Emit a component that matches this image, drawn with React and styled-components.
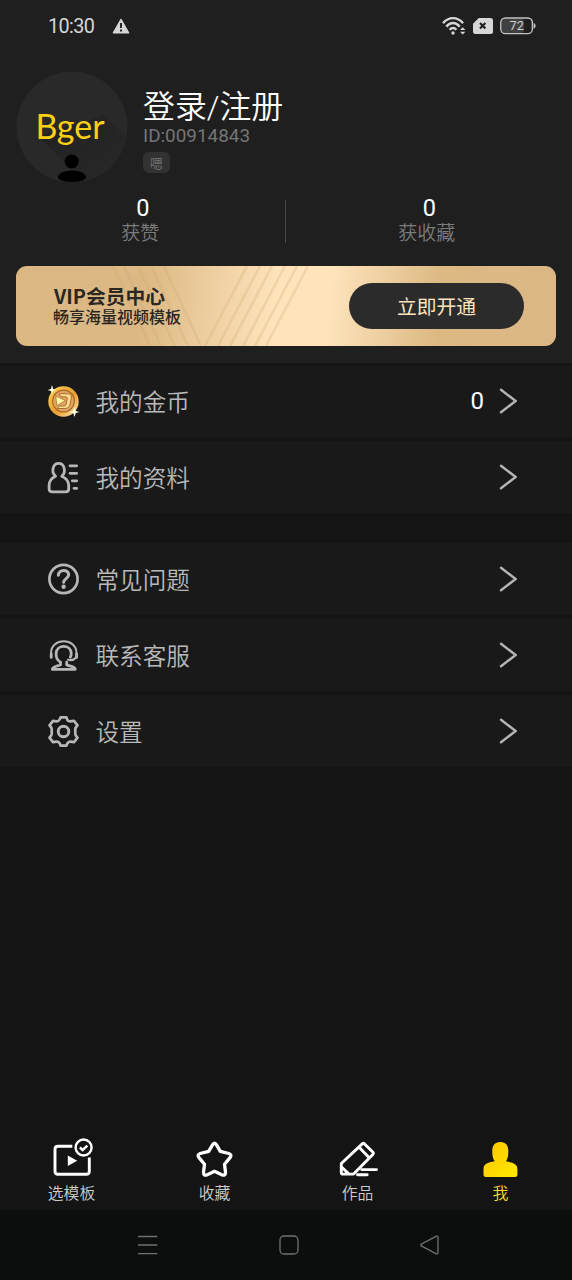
import styled, { createGlobalStyle } from "styled-components";

const GlobalStyle = createGlobalStyle`
  * {
    box-sizing: border-box;
  }

  body {
    margin: 0;
    background: #141414;
    font-family: Roboto, "Noto Sans CJK SC", sans-serif;
  }
`;

const Screen = styled.div`
  display: flex;
  flex-direction: column;
  width: 572px;
  height: 1280px;
  background: #141414;
`;

const Header = styled.header`
  height: 364px;
  background: #1f1f1f;
  border-bottom: 1px solid #171717;
`;

const StatusBar = styled.div`
  display: flex;
  align-items: center;
  height: 52px;
  padding: 0 36px 0 48px;
`;

const Clock = styled.span`
  width: 64px;
  padding-top: 2px;
  color: #d6d6d6;
  font-size: 19.8px;
  letter-spacing: -0.6px;
  line-height: 24px;
`;

const StatusIcons = styled.div`
  display: flex;
  align-items: center;
  gap: 7px;
  margin-left: auto;
`;

const Profile = styled.div`
  display: flex;
  height: 131px;
  padding: 19px 16px 0;
`;

const Avatar = styled.div`
  width: 112px;
  height: 112px;
  margin-right: 15px;
`;

const ProfileInfo = styled.div`
  padding-top: 17px;
`;

const Name = styled.h1`
  margin: 0;
  color: #fff;
  font-size: 31.9px;
  font-weight: 350;
  line-height: 38px;
`;

const UserId = styled.div`
  color: #757575;
  font-size: 18.9px;
  line-height: 20px;
`;

const Tag = styled.span`
  display: flex;
  align-items: center;
  justify-content: center;
  width: 27px;
  height: 21px;
  margin-top: 6px;
  border-radius: 6px;
  background: #323232;
  color: #777;
  font-size: 13px;
  font-weight: 350;
`;

const Stats = styled.div`
  display: flex;
  height: 83px;
  padding-top: 12px;
`;

const Stat = styled.div`
  flex: 1;
  text-align: center;
`;

const StatDivider = styled.div`
  width: 1px;
  height: 43px;
  margin: 5px 1px 0 -1px;
  background: #484848;
`;

const StatValue = styled.div`
  color: #fff;
  font-size: 23.5px;
  line-height: 26px;
`;

const StatLabel = styled.div`
  padding: 1px 5px 0 0;
  color: #7c7c7c;
  font-size: 19px;
  font-weight: 350;
  line-height: 24px;
`;

const VipBanner = styled.section`
  display: flex;
  align-items: center;
  position: relative;
  width: 540px;
  height: 80px;
  margin: 0 16px;
  padding: 0 32px 0 37px;
  border-radius: 11px;
  overflow: hidden;
  background: linear-gradient(
    96deg,
    #dab783 0%,
    #dcb984 24%,
    #fee3bb 48%,
    #fee3bb 58%,
    #dcb983 78%,
    #dab785 100%
  );
`;

const BannerStripes = styled.svg`
  position: absolute;
  top: 0;
  left: 0;
`;

const BannerText = styled.div`
  position: relative;
  flex: 1;
  color: #2a2722;
`;

const BannerTitle = styled.div`
  margin-bottom: 2px;
  padding-left: 1px;
  font-family: "Noto Sans CJK SC", sans-serif;
  font-size: 19.8px;
  font-weight: 700;
  line-height: 20px;
`;

const BannerSubtitle = styled.div`
  font-size: 16px;
  font-weight: 500;
  line-height: 19px;
`;

const OpenButton = styled.button`
  position: relative;
  width: 175px;
  height: 46px;
  border: none;
  border-radius: 23px;
  padding: 0 0 2px;
  background: #2b2b2b;
  color: #fce4be;
  font-family: inherit;
  font-size: 19.8px;
`;

const Menu = styled.main`
  flex: 1;
  padding-top: 1px;
`;

const MenuGroup = styled.div`
  display: flex;
  flex-direction: column;
  gap: 4px;
  margin-bottom: 30px;
`;

const MenuRow = styled.div`
  display: flex;
  align-items: center;
  height: 72px;
  padding: 0 55px 0 47px;
  background: #191919;
`;

const MenuLabel = styled.span`
  flex: 1;
  margin-left: 15.5px;
  padding-top: 3px;
  color: #b9b9b9;
  font-size: 23.6px;
  font-weight: 350;
  line-height: 32px;
`;

const MenuValue = styled.span`
  margin-right: 15px;
  color: #fff;
  font-size: 24px;
`;

const TabBar = styled.nav`
  display: flex;
  height: 75px;
`;

const Tab = styled.div`
  flex: 1;
  display: flex;
  flex-direction: column;
  align-items: center;
  color: ${(props) => (props.$active ? "#fddc2c" : "#cdcdcd")};
  font-size: 15.8px;
  font-weight: 350;
  line-height: 22px;

  svg {
    margin-bottom: 2px;
  }
`;

const SystemNav = styled.div`
  display: flex;
  align-items: center;
  gap: 118px;
  height: 70px;
  padding-left: 136px;
  background: #0a0f0e;
`;

const WarningIcon = () => (
  <svg width="18" height="16" viewBox="0 0 18 16">
    <path d="M9 1L17 15H1Z" fill="#d6d6d6" stroke="#d6d6d6" strokeWidth="1" strokeLinejoin="round" />
    <path d="M9 5V10M9 11.6V13.6" stroke="#1f1f1f" strokeWidth="1.9" />
  </svg>
);

const WifiIcon = () => (
  <svg width="24" height="20" viewBox="0 0 24 20" fill="none" stroke="#d6d6d6" strokeWidth="2.4">
    <path d="M1 7.2C6.6 .4 15.4 .4 21 7.2" />
    <path d="M4.3 10.6C8.4 5.8 13.6 5.8 17.7 10.6" />
    <path d="M7.6 13.8C9.8 11.3 12.2 11.3 14.4 13.8" />
    <circle cx="11" cy="17" r="1.7" fill="#d6d6d6" stroke="none" />
    <path d="M18 14L20.7 11.2L23.4 14ZM18 15.8H23.4L20.7 18.6Z" fill="#d6d6d6" stroke="none" />
  </svg>
);

const SimIcon = () => (
  <svg width="20" height="16" viewBox="0 0 20 16">
    <path d="M5.8 0H17.5Q20 0 20 2.5V13.5Q20 16 17.5 16H2.5Q0 16 0 13.5V5.8Z" fill="#d6d6d6" />
    <path d="M7 5L12.4 10.6M12.4 5L7 10.6" stroke="#1f1f1f" strokeWidth="2.1" />
  </svg>
);

const BatteryIcon = () => (
  <svg width="36" height="18" viewBox="0 0 36 18">
    <rect x="2" y="2" width="22" height="14" rx="3" fill="#404040" />
    <rect x=".8" y="1" width="31.6" height="15.6" rx="4.6" fill="none" stroke="#c4c4c4" strokeWidth="1.4" />
    <path d="M33.6 6Q35.6 6.5 35.6 8.8Q35.6 11.2 33.6 11.7Z" fill="#c4c4c4" />
    <text x="16.7" y="13.4" textAnchor="middle" fontSize="12.6" fill="#d0d0d0" fontFamily="Roboto, sans-serif">
      72
    </text>
  </svg>
);

const AvatarLogo = () => (
  <svg width="112" height="112" viewBox="0 0 112 112">
    <defs>
      <clipPath id="avatar">
        <circle cx="56" cy="56" r="55.5" />
      </clipPath>
      <linearGradient id="shade" x1="0" y1="0" x2="1" y2="1">
        <stop offset="0" stopColor="#202020" />
        <stop offset="1" stopColor="#292929" />
      </linearGradient>
    </defs>
    <g clipPath="url(#avatar)">
      <rect width="112" height="112" fill="#292929" />
      <path d="M22 66L88 44L112 68V112H72Z" fill="url(#shade)" />
      <circle cx="55.7" cy="90.5" r="7" />
      <path d="M42 107Q42 100 56 99.5Q70 100 70 107Q67 111 56 111Q45 111 42 107Z" />
    </g>
    <text
      x="19.5"
      y="68"
      textLength="69"
      lengthAdjust="spacingAndGlyphs"
      fill="#f9d016"
      fontFamily="Lato, sans-serif"
      fontSize="34.5"
    >
      Bger
    </text>
  </svg>
);

const Chevron = () => (
  <svg width="18" height="26" viewBox="0 0 18 26" fill="none">
    <path d="M2 1.8L16.7 13L2 24.2" stroke="#b4b4b4" strokeWidth="2.4" strokeLinecap="round" />
  </svg>
);

const CoinIcon = () => (
  <svg width="33" height="33" viewBox="0 0 33 33">
    <defs>
      <linearGradient id="coin" x1="0" y1="0" x2="1" y2="1">
        <stop offset="0" stopColor="#ffd65a" />
        <stop offset=".55" stopColor="#e99c2c" />
        <stop offset="1" stopColor="#fff0c0" />
      </linearGradient>
    </defs>
    <circle cx="16.5" cy="16.5" r="15.2" fill="url(#coin)" />
    <circle cx="16.5" cy="16" r="10.9" fill="#e3a562" stroke="#b06a24" strokeWidth="1.2" />
    <path
      d="M12 8.8H20.5Q25 8.8 24.3 13L22.8 20Q22 23.5 18.5 23.5H10.5L12.3 21H17.3Q18.8 21 19.2 19.3L20.3 14Q20.7 11.8 18.5 11.8H14Z"
      fill="#ffe08a"
      stroke="#96592e"
      strokeWidth=".8"
    />
    <path d="M8.8 11L18.3 15.6L9.8 20.6Z" fill="#fff6a0" stroke="#96592e" strokeWidth=".6" />
    <path d="M5 0L6.1 3.9L9.5 5L6.1 6.1L5 9.5L3.9 6.1L.5 5L3.9 3.9Z" fill="#fffbe1" />
    <path d="M27.5 22L28.8 25.9L32.5 27L28.8 28.1L27.5 32L26.2 28.1L22.5 27L26.2 25.9Z" fill="#fffbe1" />
  </svg>
);

const ProfileIcon = () => (
  <svg width="33" height="33" viewBox="0 0 33 33" fill="none" stroke="#b7b7b7" strokeWidth="2.8" strokeLinecap="round" strokeLinejoin="round">
    <path d="M8.6 15.2C5.8 12.8 5.4 9.4 6.3 6.6C8 .9 15.3 .9 17 6.6C17.9 9.4 17.5 12.8 14.7 15.2C19.5 17.2 21.7 19.9 21.7 24.5V27.7Q21.7 30.8 18.6 30.8H5.2Q2.1 30.8 2.1 27.7V24.5C2.1 19.9 4 17.2 8.6 15.2Z" />
    <path d="M23 4.8H29.7M23 12.3H29.7M25.3 19.8H29.7M27 27.3H29.7" />
  </svg>
);

const HelpIcon = () => (
  <svg width="33" height="33" viewBox="0 0 33 33" fill="none" stroke="#b7b7b7" strokeWidth="2.7" strokeLinecap="round">
    <circle cx="16.5" cy="16" r="14.1" />
    <path d="M11.4 12.3C11.6 5.7 21.6 6 21.7 11.8C21.7 15.3 16.6 15.9 16.6 19.3" strokeWidth="3" />
    <circle cx="16.6" cy="23.7" r="2.2" fill="#b7b7b7" stroke="none" />
  </svg>
);

const ServiceIcon = () => (
  <svg width="33" height="33" viewBox="0 0 33 33" fill="none" stroke="#b7b7b7" strokeLinecap="round" strokeLinejoin="round">
    <path d="M4 18V14.3C4 -1.7 29.5 -1.7 29.5 14.3V18" strokeWidth="2" />
    <path d="M4.2 15V18.4M29.6 14.8V18.4" strokeWidth="2.8" />
    <path d="M29.2 18.5Q26 22.1 21 20.8" strokeWidth="2.2" />
    <path d="M13.5 23.2C9.8 21 8.8 17.7 9.2 14C9.8 5.1 23.6 5.1 24.2 14C24.3 16 24 17.3 23.3 18.2M13.5 23.2V26C9.5 27.2 6 27.4 5.3 30.3H28.3C27.6 27.3 23.5 27.3 19.7 26V23.2" strokeWidth="2.8" />
  </svg>
);

const SettingsIcon = () => (
  <svg width="33" height="33" viewBox="0 0 33 33" fill="none" stroke="#b7b7b7" strokeWidth="2.7" strokeLinejoin="round">
    <path d="M13.6 2.3H19.4Q20 5.3 21.6 6T27 5.8L30.5 10.3Q28.3 12.6 28.3 14V19Q28.3 20.4 30.5 22.7L27 27.2Q23.5 26.3 21.8 27T19.4 30.7H13.6Q13 27.7 11.4 27T6 27.2L2.5 22.7Q4.7 20.4 4.7 19V14Q4.7 12.6 2.5 10.3L6 5.8Q9.5 6.7 11.2 6T13.6 2.3Z" />
    <circle cx="16.5" cy="16.5" r="5.3" strokeWidth="2.9" />
  </svg>
);

const TemplateIcon = () => (
  <svg width="42" height="46" viewBox="0 0 42 46" fill="none" stroke="#fff" strokeWidth="2.9">
    <path d="M21.3 11.3H7Q4 11.3 4 14.3V36.3Q4 39.3 7 39.3H35.3Q38.3 39.3 38.3 36.3V22.5" />
    <path d="M16.8 20.5V31L26.2 25.7Z" fill="#fff" stroke="none" />
    <circle cx="32.6" cy="12.5" r="8" strokeWidth="2.4" />
    <path d="M28.9 12.5L31.6 15L36.4 10.6" strokeWidth="2.4" />
  </svg>
);

const StarIcon = () => (
  <svg width="40" height="46" viewBox="0 0 40 46" fill="none">
    <path
      d="M17.5 9.9Q19.5 6.5 21.5 9.9L25.3 16.3L33.9 18.5Q37.3 19.7 35 22.6L29.5 29.2L30.5 37.2Q30.5 41.2 26.8 39.7L19.5 36.3L12.2 39.7Q8.5 41.2 8.5 37.2L9.5 29.2L4 22.6Q1.7 19.7 5.1 18.5L13.7 16.3Z"
      stroke="#fff"
      strokeWidth="3.3"
      strokeLinejoin="round"
    />
  </svg>
);

const WorksIcon = () => (
  <svg width="40" height="46" viewBox="0 0 40 46" fill="none" stroke="#fff" strokeWidth="2.9" strokeLinejoin="round" strokeLinecap="round">
    <path d="M3.3 28.5L24.2 8.9Q25.4 7.8 26.6 8.9L34.7 17.1Q35.9 18.3 34.8 19.5L15.6 39.1H5Q3.3 39.1 3.3 37.4ZM21.1 12.2L31.2 22.7M4 32.5L10.5 38.6" />
    <path d="M23.7 34.6H38.5M19.5 39.7H29.2" strokeWidth="2.9" />
  </svg>
);

const MeIcon = () => (
  <svg width="40" height="46" viewBox="0 0 40 46">
    <defs>
      <linearGradient id="me" x1="0" y1="0" x2="1" y2="1">
        <stop offset="0" stopColor="#ffc400" />
        <stop offset="1" stopColor="#ffea00" />
      </linearGradient>
    </defs>
    <path
      d="M19.3 6.9C25.5 6.9 27.6 11.3 27.3 17C27.2 21 26.8 23.5 25 26.3C32.5 27.6 36.4 29.2 36.4 34V39.5Q36.4 42 33.9 42H5Q2.5 42 2.5 39.5V34C2.5 29.2 6.2 27.6 13.7 26.3C11.8 23.5 11.4 21 11.3 17C11 11.3 13.1 6.9 19.3 6.9Z"
      fill="url(#me)"
    />
  </svg>
);

const menuGroups = [
  [
    { label: "我的金币", icon: CoinIcon, value: "0" },
    { label: "我的资料", icon: ProfileIcon },
  ],
  [
    { label: "常见问题", icon: HelpIcon },
    { label: "联系客服", icon: ServiceIcon },
    { label: "设置", icon: SettingsIcon },
  ],
];

const tabs = [
  { label: "选模板", icon: TemplateIcon },
  { label: "收藏", icon: StarIcon },
  { label: "作品", icon: WorksIcon },
  { label: "我", icon: MeIcon, active: true },
];

const ProfileHeader = () => {
  return (
    <Header>
      <StatusBar>
        <Clock>10:30</Clock>
        <WarningIcon />
        <StatusIcons>
          <WifiIcon />
          <SimIcon />
          <BatteryIcon />
        </StatusIcons>
      </StatusBar>
      <Profile>
        <Avatar>
          <AvatarLogo />
        </Avatar>
        <ProfileInfo>
          <Name>登录/注册</Name>
          <UserId>ID:00914843</UserId>
          <Tag>嗯</Tag>
        </ProfileInfo>
      </Profile>
      <Stats>
        <Stat>
          <StatValue>0</StatValue>
          <StatLabel>获赞</StatLabel>
        </Stat>
        <StatDivider />
        <Stat>
          <StatValue>0</StatValue>
          <StatLabel>获收藏</StatLabel>
        </Stat>
      </Stats>
      <VipBanner>
        <BannerStripes width="540" height="80" viewBox="0 0 540 80" fill="none">
          <path
            d="M97 0L134 80M108 0L145 80M122 0L159 80M135 0L172 80M148 0L185 80"
            stroke="#c9a26b"
            strokeOpacity=".22"
            strokeWidth="2.5"
          />
          <path
            d="M231 0L189 80M244 0L202 80M256 0L214 80M269 0L227 80M281 0L239 80M292 0L250 80"
            stroke="#d6b27d"
            strokeOpacity=".32"
            strokeWidth="2.5"
          />
        </BannerStripes>
        <BannerText>
          <BannerTitle>VIP会员中心</BannerTitle>
          <BannerSubtitle>畅享海量视频模板</BannerSubtitle>
        </BannerText>
        <OpenButton>立即开通</OpenButton>
      </VipBanner>
    </Header>
  );
};

const App = () => {
  return (
    <Screen>
      <GlobalStyle />
      <ProfileHeader />
      <Menu>
        {menuGroups.map((group, i) => (
          <MenuGroup key={i}>
            {group.map(({ label, icon: Icon, value }) => (
              <MenuRow key={label}>
                <Icon />
                <MenuLabel>{label}</MenuLabel>
                {value && <MenuValue>{value}</MenuValue>}
                <Chevron />
              </MenuRow>
            ))}
          </MenuGroup>
        ))}
      </Menu>
      <TabBar>
        {tabs.map(({ label, icon: Icon, active }) => (
          <Tab key={label} $active={active}>
            <Icon />
            {label}
          </Tab>
        ))}
      </TabBar>
      <SystemNav>
        <svg width="24" height="24" viewBox="0 0 24 24" stroke="#6d7170" strokeWidth="1.3">
          <path d="M2 3.5H21.3M2 12H21.3M2 20.7H21.3" />
        </svg>
        <svg width="24" height="24" viewBox="0 0 24 24" fill="none" stroke="#6d7170" strokeWidth="1.3">
          <rect x="2" y="3" width="18" height="18" rx="4" />
        </svg>
        <svg width="24" height="24" viewBox="0 0 24 24" fill="none" stroke="#6d7170" strokeWidth="1.3" strokeLinejoin="round">
          <path d="M1.3 11.1L16.4 3.2Q18 2.6 18 4.4V19.6Q18 21.4 16.4 20.8L1.3 12.9Q.2 12 1.3 11.1Z" />
        </svg>
      </SystemNav>
    </Screen>
  );
};

export default App;
